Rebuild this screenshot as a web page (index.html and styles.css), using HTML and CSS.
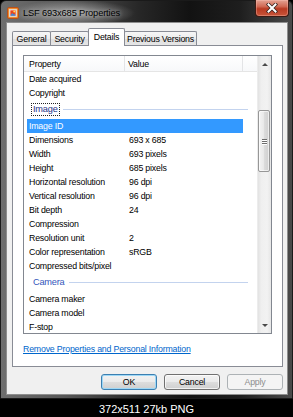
FILE: index.html
```html
<!DOCTYPE html>
<html>
<head>
<meta charset="utf-8">
<title>LSF 693x685 Properties</title>
<link rel="stylesheet" href="styles.css">
</head>
<body>
<div class="win">
  <div class="titlebar">
    <svg class="appicon" width="12" height="12" viewBox="0 0 12 12">
      <rect x="0.5" y="0.5" width="11" height="11" rx="1.5" fill="#f08a2c" stroke="#b8501a"/>
      <rect x="2.5" y="2.5" width="7" height="7" fill="#fff" stroke="#d9d9d9" stroke-width="0.8"/>
      <rect x="3.3" y="3.3" width="5.4" height="5.4" fill="#e8451c"/>
      <circle cx="7.3" cy="4.6" r="1" fill="#ffe15a"/>
      <path d="M3.3 8.7 L5.2 6 L6.6 7.6 L7.4 6.8 L8.7 8.7 Z" fill="#3a8dde"/>
    </svg>
    <span class="title">LSF 693x685 Properties</span>
    <div class="close">
      <svg width="12" height="10" viewBox="0 0 12 10">
        <path d="M2.5 1.5 L9.5 8.5 M9.5 1.5 L2.5 8.5" stroke="#3a2420" stroke-width="3.6" stroke-linecap="square"/>
        <path d="M2.5 1.5 L9.5 8.5 M9.5 1.5 L2.5 8.5" stroke="#fff" stroke-width="2" stroke-linecap="square"/>
      </svg>
    </div>
  </div>
  <div class="client">
    <div class="tabs">
      <div class="tab t-general">General</div>
      <div class="tab t-security">Security</div>
      <div class="tab t-details sel">Details</div>
      <div class="tab t-prev">Previous Versions</div>
    </div>
    <div class="panel">
      <div class="list">
        <div class="lmain">
          <div class="hdr">
            <div class="hc c1">Property</div>
            <div class="hc c2">Value</div>
            <div class="hc c3"></div>
          </div>
          <div class="row"><span class="pc">Date acquired</span><span class="vc"></span></div>
          <div class="row"><span class="pc">Copyright</span><span class="vc"></span></div>
          <div class="grp"><span class="gt focus">Image</span><span class="gl"></span></div>
          <div class="row sel"><span class="pc">Image ID</span><span class="vc"></span></div>
          <div class="row"><span class="pc">Dimensions</span><span class="vc">693 x 685</span></div>
          <div class="row"><span class="pc">Width</span><span class="vc">693 pixels</span></div>
          <div class="row"><span class="pc">Height</span><span class="vc">685 pixels</span></div>
          <div class="row"><span class="pc">Horizontal resolution</span><span class="vc">96 dpi</span></div>
          <div class="row"><span class="pc">Vertical resolution</span><span class="vc">96 dpi</span></div>
          <div class="row"><span class="pc">Bit depth</span><span class="vc">24</span></div>
          <div class="row"><span class="pc">Compression</span><span class="vc"></span></div>
          <div class="row"><span class="pc">Resolution unit</span><span class="vc">2</span></div>
          <div class="row"><span class="pc">Color representation</span><span class="vc">sRGB</span></div>
          <div class="row"><span class="pc">Compressed bits/pixel</span><span class="vc"></span></div>
          <div class="grp"><span class="gt cam">Camera</span><span class="gl"></span></div>
          <div class="row"><span class="pc">Camera maker</span><span class="vc"></span></div>
          <div class="row"><span class="pc">Camera model</span><span class="vc"></span></div>
          <div class="row"><span class="pc">F-stop</span><span class="vc"></span></div>
        </div>
        <div class="vscroll">
          <div class="sbtn"><span class="arr up"></span></div>
          <div class="sgap"></div>
          <div class="thumb"><span class="grip"></span><span class="grip"></span><span class="grip"></span></div>
          <div class="sbtn down"><span class="arr dn"></span></div>
        </div>
      </div>
      <a class="link" href="#">Remove Properties and Personal Information</a>
    </div>
    <div class="buttons">
      <div class="btn def">OK</div>
      <div class="btn">Cancel</div>
      <div class="btn dis">Apply</div>
    </div>
  </div>
</div>
<div class="caption">372x511 27kb PNG</div>
</body>
</html>
```

FILE: styles.css
```css
* { box-sizing: border-box; margin: 0; padding: 0; }
html, body { background: #000; width: 293px; height: 417px; overflow: hidden; }
body {
  font-family: "Liberation Sans", Arial, sans-serif;
  font-size: 8.8px;
  letter-spacing: -0.2px;
  color: #000;
}

.win {
  width: 293px;
  height: 399px;
  border: 1px solid #1a1a1a;
  border-radius: 6px 6px 0 0;
  padding: 0 5px 4px 6px;
  display: flex;
  flex-direction: column;
  position: relative;
  background:
    radial-gradient(ellipse 62px 13px at 72px 12px, rgba(190,190,190,0.75), rgba(190,190,190,0) 100%) no-repeat,
    linear-gradient(90deg, #6e6e6e 0, #565656 22%, #262626 48%, #121212 65%, #1e1e1e 82%, #4a4a4a 100%);
}

.titlebar {
  height: 22px;
  display: flex;
  align-items: center;
  padding-top: 2px;
}
.appicon { display: block; flex: none; }
.title {
  margin-left: 4px;
  font-size: 9.3px;
  letter-spacing: -0.15px;
  color: #000;
  text-shadow: 0 0 4px rgba(255,255,255,0.6);
}
.close {
  position: absolute;
  top: -1px;
  right: 3px;
  width: 34px;
  height: 17px;
  border: 1px solid #3b1a14;
  border-top: none;
  border-radius: 0 0 4px 4px;
  background: linear-gradient(180deg, #e4a293 0, #d16a55 40%, #b93a22 55%, #c8553a 100%);
  box-shadow: inset 0 0 0 1px rgba(255,200,190,0.35);
  display: flex;
  align-items: center;
  justify-content: center;
}
.close svg { display: block; }

.client {
  flex: 1;
  background: #f0f0f0;
  display: flex;
  flex-direction: column;
  box-shadow: 0 0 0 1px #8e8e8e;
}

.tabs {
  height: 22px;
  display: flex;
  align-items: flex-end;
  padding-left: 5px;
}
.tab {
  height: 14px;
  border: 1px solid #898c95;
  border-bottom: none;
  border-radius: 2px 2px 0 0;
  background: linear-gradient(180deg, #f6f6f6 0, #ececec 50%, #dedede 51%, #e6e6e6 100%);
  display: flex;
  align-items: center;
  justify-content: center;
  padding-top: 1px;
  position: relative;
}
.t-general { width: 39px; }
.t-security { width: 39px; margin-left: -1px; }
.t-details { width: 37px; margin-left: -1px; }
.t-prev { width: 73px; margin-left: -1px; }
.tab.sel {
  height: 18px;
  margin-bottom: -1px;
  background: #fff;
  z-index: 2;
  padding-top: 0;
  padding-bottom: 2px;
}

.panel {
  height: 322px;
  margin: 0 4px 0 5px;
  border: 1px solid #898c95;
  background: #fff;
  padding: 9px 10px 0 10px;
  display: flex;
  flex-direction: column;
}

.list {
  height: 279px;
  border: 1px solid #828790;
  display: flex;
  overflow: hidden;
}
.lmain {
  flex: 1;
  display: flex;
  flex-direction: column;
  overflow: hidden;
}
.hdr {
  height: 16px;
  flex: none;
  display: flex;
  background: linear-gradient(180deg, #ffffff 0, #f7f8fa 100%);
  border-bottom: 1px solid #e5e5e5;
}
.hc {
  display: flex;
  align-items: center;
  border-right: 1px solid #e3e4e6;
}
.c1 { width: 101px; padding-left: 5px; }
.c2 { width: 118px; padding-left: 3px; }
.c3 { flex: 1; border-right: none; }

.row {
  height: 14px;
  flex: none;
  display: flex;
  align-items: center;
  margin-left: 3px;
  width: 216px;
}
.pc { width: 98px; padding-left: 2px; white-space: nowrap; }
.vc { padding-left: 4px; white-space: nowrap; }
.row.sel { background: #3399ff; color: #fff; }

.grp {
  height: 19px;
  flex: none;
  display: flex;
  align-items: center;
  margin-left: 7px;
  margin-right: 9px;
}
.gt {
  border: 1px dotted transparent;
  padding: 0 1px;
  line-height: 11px;
  font-size: 9.2px;
  color: #1e3287;
}
.gt.focus { border-color: #222; }
.gt.cam { color: #3355bb; }
.gl {
  flex: 1;
  height: 1px;
  margin-left: 3px;
  background: #c3d3ee;
}

.vscroll {
  width: 14px;
  flex: none;
  display: flex;
  flex-direction: column;
  background: linear-gradient(90deg, #e2e2e2 0, #efefef 25%, #f2f2f2 70%, #e6e6e6 100%);
  border-left: 1px solid #ececec;
}
.sbtn {
  height: 16px;
  flex: none;
  display: flex;
  align-items: center;
  justify-content: center;
}
.sbtn.down { margin-top: auto; }
.arr {
  width: 0;
  height: 0;
  border-left: 3px solid transparent;
  border-right: 3px solid transparent;
}
.arr.up { border-bottom: 3px solid #4a4a4a; }
.arr.dn { border-top: 3px solid #4a4a4a; }
.sgap { height: 38px; flex: none; }
.thumb {
  height: 62px;
  flex: none;
  margin: 0 1px 0 0;
  border: 1px solid #979797;
  border-radius: 2px;
  background: linear-gradient(90deg, #f4f4f4 0, #e9e9e9 45%, #dbdbdb 55%, #cfcfcf 100%);
  box-shadow: inset 0 0 0 1px rgba(255,255,255,0.6);
  display: flex;
  flex-direction: column;
  align-items: center;
  justify-content: center;
  gap: 1px;
}
.grip {
  width: 5px;
  height: 1px;
  background: #6d6d6d;
  box-shadow: 0 1px 0 #fff;
}

.link {
  margin-top: 9px;
  line-height: 12px;
  color: #0066cc;
  text-decoration: underline;
  align-self: flex-start;
}

.buttons {
  display: flex;
  justify-content: flex-end;
  gap: 7px;
  margin-top: 7px;
  padding-right: 4px;
}
.btn {
  width: 56px;
  height: 16px;
  border: 1px solid #707070;
  border-radius: 3px;
  background: linear-gradient(180deg, #f2f2f2 0, #ebebeb 48%, #dddddd 52%, #cfcfcf 100%);
  box-shadow: inset 0 0 0 1px rgba(255,255,255,0.7);
  display: flex;
  align-items: center;
  justify-content: center;
}
.btn.def {
  border-color: #3c7fb1;
  box-shadow: inset 0 0 0 1px #9ed8f6;
}
.btn.dis {
  border-color: #adb2b5;
  background: #f4f4f4;
  color: #8d8d8d;
  box-shadow: none;
}

.caption {
  height: 18px;
  color: #fff;
  font-size: 11px;
  letter-spacing: 0;
  line-height: 18px;
  text-align: center;
  padding-top: 1px;
}
```
